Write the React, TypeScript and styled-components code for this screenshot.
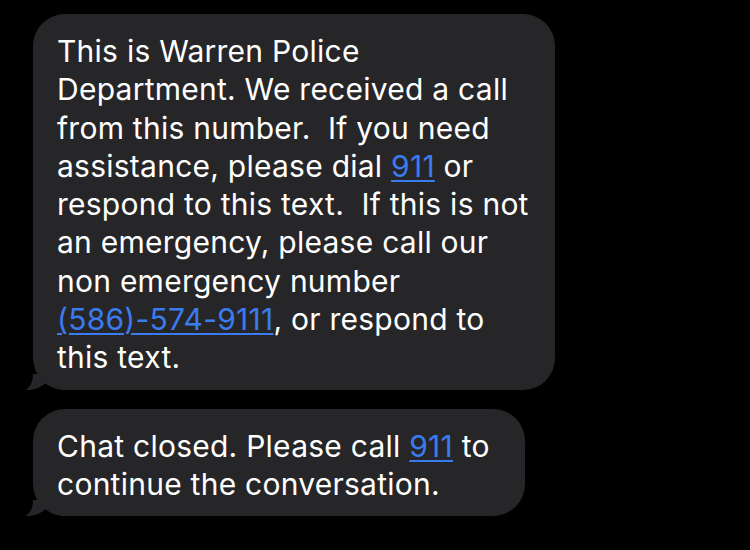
import styled, { createGlobalStyle } from "styled-components";

const GlobalStyle = createGlobalStyle`
  html, body {
    margin: 0;
    padding: 0;
    background: #000000;
  }
`;

type Part = string | { link: string };

const firstMessage: Part[][] = [
  ["This is Warren Police"],
  ["Department. We received a call"],
  ["from this number.  If you need"],
  ["assistance, please dial ", { link: "911" }, " or"],
  ["respond to this text.  If this is not"],
  ["an emergency, please call our"],
  ["non emergency number"],
  [{ link: "(586)-574-9111" }, ", or respond to"],
  ["this text."],
];

const secondMessage: Part[][] = [
  ["Chat closed. Please call ", { link: "911" }, " to"],
  ["continue the conversation."],
];

function Bubble({ lines, width }: { lines: Part[][]; width: number }) {
  return (
    <BubbleBox $width={width}>
      {lines.map((line, i) => (
        <Line key={i}>
          {line.map((part, j) =>
            typeof part === "string" ? (
              <span key={j}>{part}</span>
            ) : (
              <Link key={j}>{part.link}</Link>
            )
          )}
        </Line>
      ))}
      <Tail width="40" height="16" viewBox="0 0 40 16">
        <path
          d="M8 0 C8 7 6 12.5 0.5 16 C8 16.6 15 14 21 9 C25 12.5 30 15.5 40 16 L40 0 Z"
          fill="#262628"
        />
      </Tail>
    </BubbleBox>
  );
}

export default function App() {
  return (
    <>
      <GlobalStyle />
      <Thread>
        <Bubble lines={firstMessage} width={522} />
        <Bubble lines={secondMessage} width={492} />
      </Thread>
    </>
  );
}

const Thread = styled.div`
  width: 750px;
  height: 550px;
  box-sizing: border-box;
  padding: 14px 0 0 33px;
  display: flex;
  flex-direction: column;
  align-items: flex-start;
  gap: 19px;
  background: #000000;
  overflow: hidden;
`;

const BubbleBox = styled.div<{ $width: number }>`
  position: relative;
  width: ${(p) => p.$width}px;
  box-sizing: border-box;
  padding: 18px 20px 13px 24px;
  background: #262628;
  border-radius: 32px;
  font-family: Inter, "Liberation Sans", sans-serif;
  font-size: 30px;
  letter-spacing: 0.25px;
  line-height: 38.3px;
  color: #ffffff;
`;

const Line = styled.div`
  white-space: pre;
`;

const Link = styled.span`
  color: #3a7cf0;
  text-decoration: underline;
  text-decoration-thickness: 2px;
  text-underline-offset: 3px;
`;

const Tail = styled.svg`
  position: absolute;
  left: -8px;
  bottom: 0;
`;
